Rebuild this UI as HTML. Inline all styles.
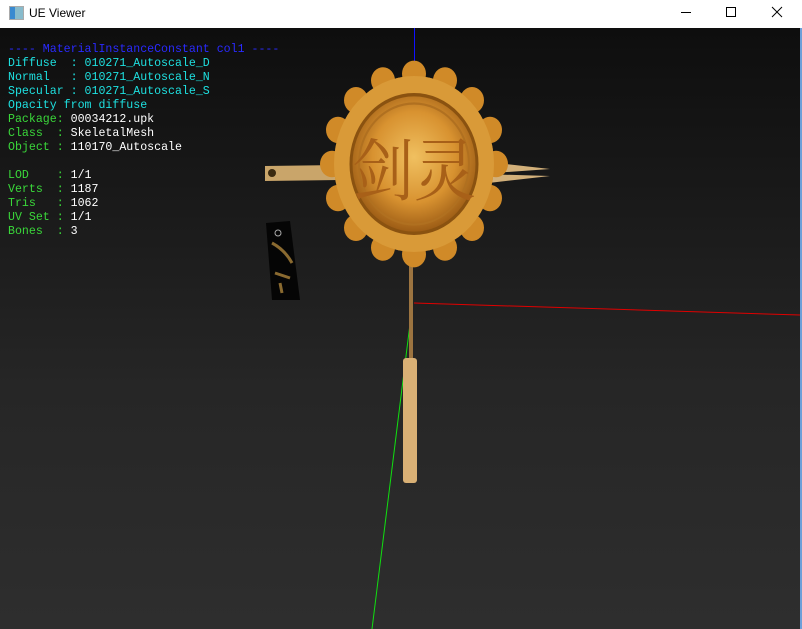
<!DOCTYPE html>
<html><head><meta charset="utf-8"><style>
html,body{margin:0;padding:0;width:802px;height:629px;overflow:hidden;background:#fff}
#title{position:absolute;left:0;top:0;width:802px;height:28px;background:#fff;font-family:"Liberation Sans",sans-serif;font-size:12px;color:#000}
#title .t{position:absolute;left:29px;top:6px}
#title .ic{position:absolute;left:9px;top:6px;width:13px;height:12px;border:1px solid #aaa;background:linear-gradient(90deg,#3a8ad0 0 40%,#8bc 40%)}
#vp{position:absolute;left:0;top:28px;width:800px;height:601px;background:linear-gradient(#0e0e0e,#1a1a1a 30%,#262626 60%,#2e2e2e)}
#edge{position:absolute;left:800px;top:28px;width:2px;height:601px;background:#6d9fd8}
#txt{position:absolute;left:8px;top:15px;font-family:"Liberation Mono",monospace;font-size:11.6px;line-height:14px;white-space:pre;color:#fff}
.b{color:#2a2aff}.c{color:#1ee0e0}.g{color:#3ad83a}
</style></head><body>
<div id="title"><div class="ic"></div><div class="t">UE Viewer</div>
<svg style="position:absolute;left:660px;top:0" width="142" height="28">
<line x1="21" y1="12.5" x2="31" y2="12.5" stroke="#000"/>
<rect x="66.5" y="7.5" width="9" height="9" fill="none" stroke="#000"/>
<line x1="112" y1="7" x2="122" y2="17" stroke="#000"/><line x1="122" y1="7" x2="112" y2="17" stroke="#000"/>
</svg></div>
<div id="vp">
<svg width="800" height="601" style="position:absolute;left:0;top:0">
<defs><radialGradient id="gd" cx="50%" cy="45%" r="55%"><stop offset="0" stop-color="#f0c060"/><stop offset="0.6" stop-color="#d89230"/><stop offset="1" stop-color="#9a5a14"/></radialGradient></defs>
<line x1="414.5" y1="0" x2="414.5" y2="40" stroke="#1010ff"/>
<line x1="414" y1="275" x2="800" y2="287" stroke="#e00000"/>
<line x1="412" y1="280" x2="372" y2="601" stroke="#10e010"/>
<polygon points="265,138 340,137 340,152 265,153" fill="#c9a56a"/>
<circle cx="272" cy="145" r="4" fill="#3a2a10"/>
<polygon points="480,133 550,141 480,146 550,148 480,156" fill="#d2b07a"/>
<rect x="409" y="230" width="4" height="100" fill="#9c7440"/>
<rect x="403" y="330" width="14" height="125" fill="#d9b075" rx="3"/>
<polygon points="266,195 290,193 300,272 272,272" fill="#050505"/>
<circle cx="278" cy="205" r="3" fill="none" stroke="#aaa"/>
<path d="M272,215 Q285,222 292,235 M275,245 L290,250 M280,255 L282,265" stroke="#8a6a30" stroke-width="3" fill="none"/>
<g transform="translate(414,136) scale(1,1.1) translate(-414,-132)">
<circle cx="414" cy="132" r="80" fill="#c07a20"/>
<g fill="#d08a28">
<circle cx="414" cy="50" r="12"/><circle cx="414" cy="214" r="12"/><circle cx="332" cy="132" r="12"/><circle cx="496" cy="132" r="12"/>
<circle cx="356" cy="74" r="12"/><circle cx="472" cy="74" r="12"/><circle cx="356" cy="190" r="12"/><circle cx="472" cy="190" r="12"/>
<circle cx="383" cy="56" r="12"/><circle cx="445" cy="56" r="12"/><circle cx="383" cy="208" r="12"/><circle cx="445" cy="208" r="12"/>
<circle cx="338" cy="101" r="12"/><circle cx="490" cy="101" r="12"/><circle cx="338" cy="163" r="12"/><circle cx="490" cy="163" r="12"/>
</g>
<circle cx="414" cy="132" r="80" fill="#d99a38"/>
<circle cx="414" cy="132" r="63" fill="url(#gd)" stroke="#8a5210" stroke-width="3"/>
<circle cx="414" cy="132" r="55" fill="none" stroke="#b07020" stroke-width="2"/>
<text x="414" y="160" font-family="'Noto Serif CJK SC',serif" font-size="62" fill="#a86018" text-anchor="middle">剑灵</text>
</g>
</svg>
<div id="txt"><span class="b">---- MaterialInstanceConstant col1 ----</span>
<span class="c">Diffuse  : 010271_Autoscale_D</span>
<span class="c">Normal   : 010271_Autoscale_N</span>
<span class="c">Specular : 010271_Autoscale_S</span>
<span class="c">Opacity from diffuse</span>
<span class="g">Package:</span> 00034212.upk
<span class="g">Class  :</span> SkeletalMesh
<span class="g">Object :</span> 110170_Autoscale

<span class="g">LOD    :</span> 1/1
<span class="g">Verts  :</span> 1187
<span class="g">Tris   :</span> 1062
<span class="g">UV Set :</span> 1/1
<span class="g">Bones  :</span> 3</div>
</div>
<div id="edge"></div>
</body></html>
